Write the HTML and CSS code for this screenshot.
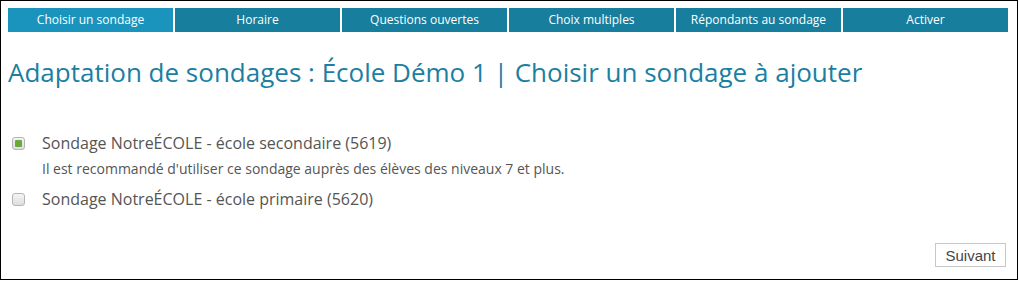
FILE: index.html
```html
<!DOCTYPE html>
<html lang="fr">
<head>
<meta charset="utf-8">
<title>Adaptation de sondages</title>
<link rel="stylesheet" href="styles.css">
</head>
<body>
<div class="frame">
  <nav class="tabs">
    <a class="tab active">Choisir un sondage</a>
    <a class="tab">Horaire</a>
    <a class="tab">Questions ouvertes</a>
    <a class="tab">Choix multiples</a>
    <a class="tab">Répondants au sondage</a>
    <a class="tab">Activer</a>
  </nav>
  <h1 class="title">Adaptation de sondages : École Démo 1 | Choisir un sondage à ajouter</h1>
  <div class="options">
    <div class="option">
      <label class="row"><span class="box checked"></span><span class="label">Sondage NotreÉCOLE - école secondaire (5619)</span></label>
      <p class="note">Il est recommandé d'utiliser ce sondage auprès des élèves des niveaux 7 et plus.</p>
    </div>
    <div class="option">
      <label class="row"><span class="box"></span><span class="label">Sondage NotreÉCOLE - école primaire (5620)</span></label>
    </div>
  </div>
  <div class="actions">
    <button class="btn">Suivant</button>
  </div>
</div>
</body>
</html>
```
FILE: styles.css
```css
html, body {
  margin: 0;
  padding: 0;
  background: #fff;
}
.frame {
  box-sizing: border-box;
  width: 1018px;
  height: 280px;
  border: 1px solid #000;
  padding: 7px 9px 0 7px;
  font-family: "Open Sans", "Liberation Sans", sans-serif;
  display: flex;
  flex-direction: column;
}
.tabs {
  display: grid;
  grid-template-columns: repeat(6, 1fr);
  gap: 2px;
  height: 24px;
}
.tab {
  background: #177e9d;
  color: #fff;
  font-size: 12px;
  display: flex;
  align-items: center;
  justify-content: center;
  line-height: 1;
}
.tab.active {
  background: #1a94bc;
}
.title {
  margin: 24px 0 0 0;
  font-weight: 400;
  font-size: 26px;
  line-height: 32px;
  color: #1b7fa1;
}
.options {
  margin-top: 44px;
  display: flex;
  flex-direction: column;
  gap: 9px;
}
.row {
  display: flex;
  align-items: center;
  gap: 17px;
  padding-left: 4px;
}
.box {
  width: 11px;
  height: 11px;
  border: 1px solid #b5b5b5;
  border-radius: 3px;
  background: linear-gradient(#f4f4f4, #dedede);
  display: flex;
  align-items: center;
  justify-content: center;
}
.box.checked::after {
  content: "";
  width: 7px;
  height: 7px;
  background: #6aaa3a;
  border-radius: 1px;
}
.label {
  font-size: 16px;
  color: #555;
  line-height: 22px;
}
.note {
  margin: 5px 0 0 34px;
  font-size: 14px;
  color: #555;
  line-height: 20px;
}
.actions {
  margin-top: auto;
  display: flex;
  justify-content: flex-end;
  padding-bottom: 12px;
}
.btn {
  font-family: "Liberation Sans", Arial, sans-serif;
  font-size: 15px;
  color: #444;
  background: #fff;
  border: 1px solid #c8c8c8;
  height: 24px;
  width: 71px;
  padding: 0;
  margin-right: 2px;
}
```
